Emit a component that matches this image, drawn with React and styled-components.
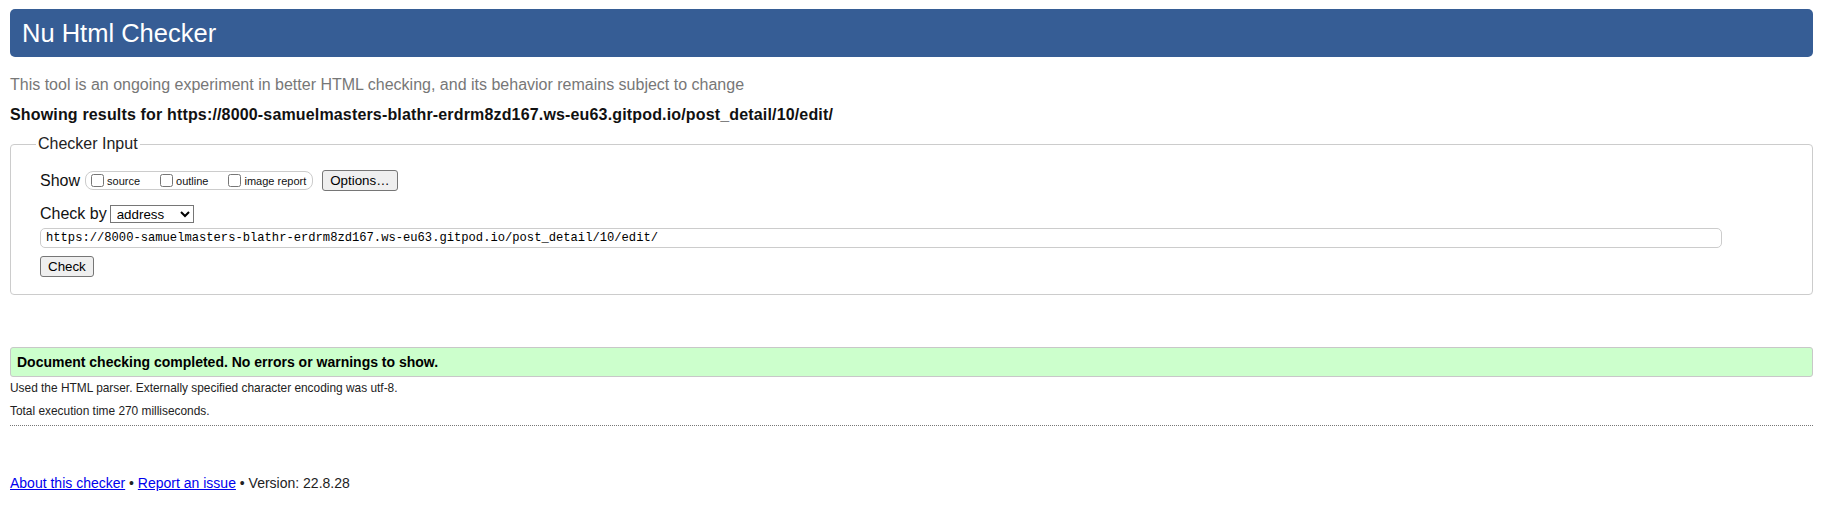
import React from 'react';
import styled, { createGlobalStyle } from 'styled-components';

const GlobalStyle = createGlobalStyle`
    body {
        margin: 0;
        background: #fff;
        color: #000;
        font-family: "Liberation Sans", Arial, sans-serif;
        font-size: 16px;
    }
`

const Page = styled.div`
    padding: 9px 15px 0 10px;
`

const Title = styled.h1`
    margin: 0;
    padding: 10px 12px 10px;
    background-color: #365d95;
    color: #fff;
    font-size: 25.5px;
    font-weight: normal;
    line-height: 28px;
    border-radius: 5px;
`

const Intro = styled.p`
    margin: 19px 0 0;
    color: #777;
    font-size: 16px;
`

const ResultsFor = styled.p`
    margin: 12px 0 0;
    font-weight: bold;
    font-size: 16px;
    letter-spacing: 0.16px;
    color: #111;
`

const InputBox = styled.fieldset`
    margin: 11px 0 0;
    padding: 16px 25px 17px;
    border: 1px solid #ccc;
    border-radius: 4px;
    legend {
        padding: 0 2px;
        font-size: 16px;
        color: #222;
    }
`

const FormBody = styled.div`
    padding-left: 4px;
`

const Row = styled.div`
    display: flex;
    align-items: center;
    height: ${p => p.$h || 19}px;
    margin-top: ${p => p.$top || 0}px;
`

const Label = styled.span`
    font-size: 16px;
    color: #111;
`

const Pill = styled.span`
    display: inline-flex;
    align-items: center;
    height: 17px;
    margin-left: 5px;
    padding: 0 6px 0 1px;
    border: 1px solid #ccc;
    border-radius: 8px;
    label {
        display: inline-flex;
        align-items: center;
        font-size: 11px;
        color: #111;
    }
    label + label {
        margin-left: 16px;
    }
    input {
        width: 13px;
        height: 13px;
        margin: 0 3px 0 4px;
    }
`

const Button = styled.button`
    font-family: "Liberation Sans", Arial, sans-serif;
    font-size: 13.333px;
    color: #000;
    height: 21px;
    padding: 1px ${p => p.$pad || 6}px;
    margin-left: ${p => p.$left || 0}px;
    background-color: #efefef;
    border: 1px solid #767676;
    border-radius: 3px;
`

const Select = styled.select`
    margin-left: 3px;
    width: 84px;
    height: 18px;
    padding: 0 2px;
    font-family: "Liberation Sans", Arial, sans-serif;
    font-size: 13.333px;
    color: #000;
    background: #fff;
    border: 1px solid #767676;
    border-radius: 0;
`

const UrlInput = styled.input`
    box-sizing: border-box;
    width: calc(100% - 65px);
    height: 20px;
    padding: 0 5px;
    font-family: "Liberation Mono", "DejaVu Sans Mono", monospace;
    font-size: 12.15px;
    color: #000;
    border: 1px solid #ccc;
    border-radius: 5px;
    outline: none;
`

const Success = styled.div`
    margin-top: 52px;
    padding: 6px;
    background-color: #ccffcc;
    border: 1px solid #c8c8c8;
    border-radius: 3px;
    font-size: 14px;
    font-weight: bold;
    color: #000;
`

const Detail = styled.p`
    margin: ${p => p.$top}px 0 0;
    font-size: 11.9px;
    color: #222;
`

const Divider = styled.hr`
    margin: 7px 0 0;
    border: 0;
    border-top: 1px dotted #777;
    height: 0;
`

const Footer = styled.p`
    margin: 49px 0 0;
    font-size: 14px;
    color: #222;
    a {
        color: #0000ee;
        text-decoration: underline;
    }
`

const url = 'https://8000-samuelmasters-blathr-erdrm8zd167.ws-eu63.gitpod.io/post_detail/10/edit/'

const App = () => {
    return (
        <Page>
            <GlobalStyle />
            <Title>Nu Html Checker</Title>
            <Intro>This tool is an ongoing experiment in better HTML checking, and its behavior remains subject to change</Intro>
            <ResultsFor>Showing results for {url}</ResultsFor>

            <InputBox>
                <legend>Checker Input</legend>
                <FormBody>
                    <Row $h={23}>
                        <Label>Show</Label>
                        <Pill>
                            <label><input type="checkbox" />source</label>
                            <label><input type="checkbox" />outline</label>
                            <label><input type="checkbox" />image report</label>
                        </Pill>
                        <Button $left={9} $pad={7}>Options…</Button>
                    </Row>
                    <Row $h={19} $top={12}>
                        <Label>Check by</Label>
                        <Select defaultValue="address">
                            <option value="address">address</option>
                            <option value="file">file upload</option>
                            <option value="text">text input</option>
                        </Select>
                    </Row>
                    <Row $h={20} $top={5}>
                        <UrlInput type="text" defaultValue={url} />
                    </Row>
                    <Row $h={21} $top={8}>
                        <Button $pad={7}>Check</Button>
                    </Row>
                </FormBody>
            </InputBox>

            <Success>Document checking completed. No errors or warnings to show.</Success>
            <Detail $top={4}>Used the HTML parser. Externally specified character encoding was utf-8.</Detail>
            <Detail $top={9}>Total execution time 270 milliseconds.</Detail>
            <Divider />

            <Footer>
                <a href="#about">About this checker</a> • <a href="#issue">Report an issue</a> • Version: 22.8.28
            </Footer>
        </Page>
    );
};

export default App;
